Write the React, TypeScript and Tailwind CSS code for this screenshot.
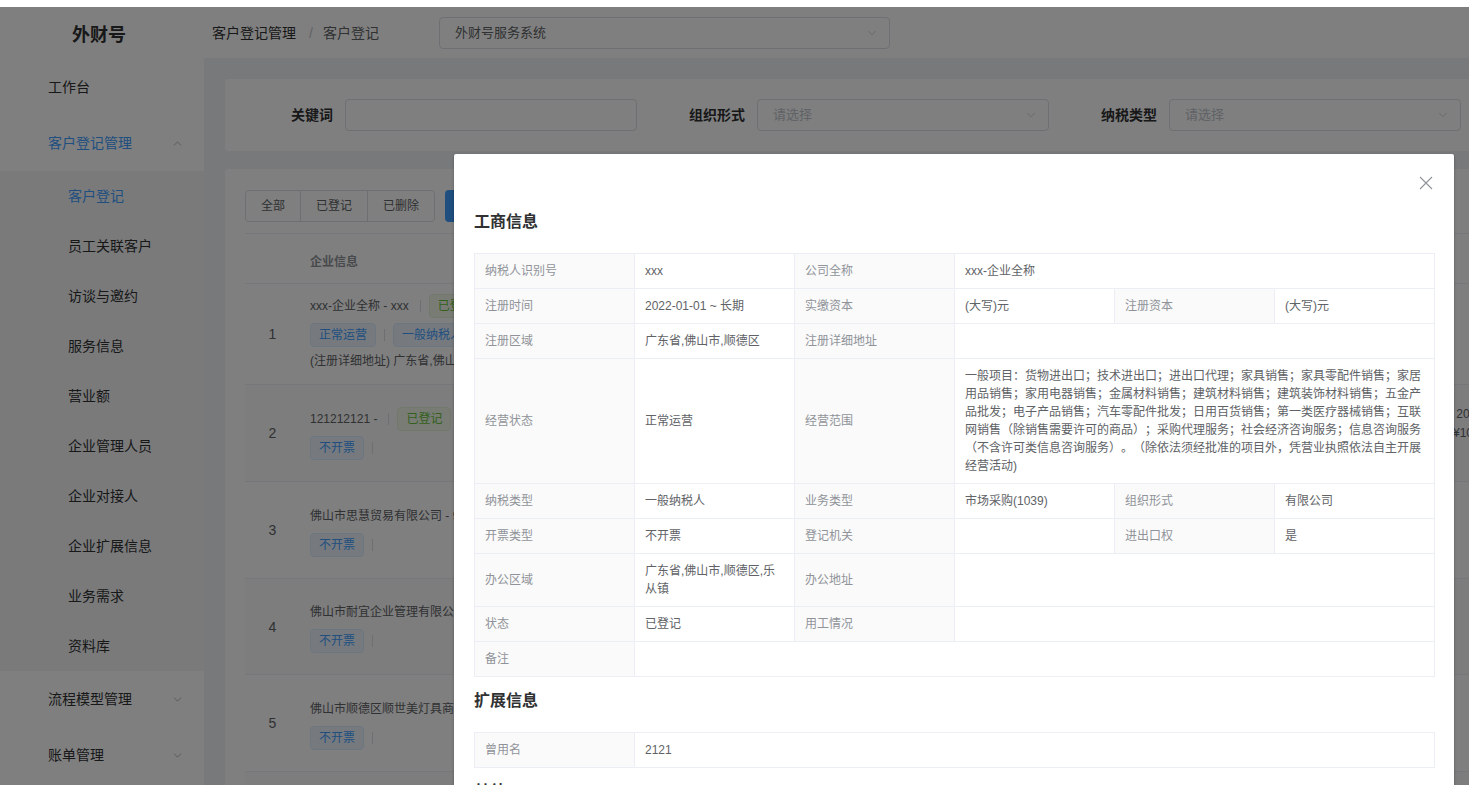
import { ChevronDown, ChevronUp } from "lucide-react";

/* ----------------------------------------------------------------
   小组件
---------------------------------------------------------------- */
function Tag({ color, children }: { color: "blue" | "green"; children: React.ReactNode }) {
  const cls =
    color === "green"
      ? "bg-[#f0f9eb] border-[#e1f3d8] text-[#67c23a]"
      : "bg-[#ecf5ff] border-[#d9ecff] text-[#409eff]";
  return (
    <span className={`inline-flex items-center h-6 px-2 text-xs border rounded-[4px] whitespace-nowrap ${cls}`}>
      {children}
    </span>
  );
}

function Sep({ first }: { first?: boolean }) {
  return <span className={`inline-block w-px h-3 bg-[#dcdfe6] ${first ? "ml-[11px] mr-2" : "mx-2"}`} />;
}

function Select({ placeholder, value, width }: { placeholder?: string; value?: string; width: string }) {
  return (
    <div className={`${width} h-8 flex items-center justify-between border border-[#dcdfe6] rounded-[4px] bg-white pl-[15px] pr-[10px]`}>
      <span className={`text-[13px] ${value ? "text-[#606266]" : "text-[#c0c4cc]"}`}>{value ?? placeholder}</span>
      <ChevronDown className="w-[14px] h-[14px] text-[#c0c4cc]" strokeWidth={1.25} />
    </div>
  );
}

/* ----------------------------------------------------------------
   数据
---------------------------------------------------------------- */
const subMenu = [
  "客户登记",
  "员工关联客户",
  "访谈与邀约",
  "服务信息",
  "营业额",
  "企业管理人员",
  "企业对接人",
  "企业扩展信息",
  "业务需求",
  "资料库",
];

type Row = {
  name: string;
  registered?: boolean;
  tags: string[];
  address?: string;
  extra?: [string, string];
  height: string;
};

const rows: Row[] = [
  {
    name: "xxx-企业全称 - xxx",
    registered: true,
    tags: ["正常运营", "一般纳税人"],
    address: "(注册详细地址) 广东省,佛山市,顺德区",
    height: "h-[101px]",
  },
  { name: "121212121 -", registered: true, tags: ["不开票"], extra: ["- 2022-01-01", "(¥100.00)"], height: "h-[97px]" },
  { name: "佛山市思慧贸易有限公司 - 9144", tags: ["不开票"], height: "h-[97px]" },
  { name: "佛山市耐宜企业管理有限公司 - 9144", tags: ["不开票"], height: "h-[96px]" },
  { name: "佛山市顺德区顺世美灯具商行 - 9244", tags: ["不开票"], height: "h-[97px]" },
  { name: "佛山市顺德区乐从镇家具有限公司 - 9144", tags: ["不开票"], height: "h-[97px]" },
];

const scope =
  "一般项目：货物进出口；技术进出口；进出口代理；家具销售；家具零配件销售；家居用品销售；家用电器销售；金属材料销售；建筑材料销售；建筑装饰材料销售；五金产品批发；电子产品销售；汽车零配件批发；日用百货销售；第一类医疗器械销售；互联网销售（除销售需要许可的商品）；采购代理服务；社会经济咨询服务；信息咨询服务（不含许可类信息咨询服务）。（除依法须经批准的项目外，凭营业执照依法自主开展经营活动)";

const L = "border border-[#ebeef5] bg-[#fafafa] text-[#909399] px-[10px] py-2 align-middle";
const V = "border border-[#ebeef5] bg-white text-[#606266] px-[10px] py-2 align-middle";

/* ----------------------------------------------------------------
   页面
---------------------------------------------------------------- */
export default function App() {
  return (
    <div className="relative w-[1469px] h-[785px] overflow-hidden bg-white font-['Liberation_Sans','Noto_Sans_CJK_SC',sans-serif]">
      <div className="h-[7px] bg-white" />
      <div className="relative h-[778px] overflow-hidden">
        {/* Header */}
        <div className="h-[51px] flex items-center bg-white">
          <div className="w-[204px] pr-[6px] pt-[5px] text-center text-[18px] font-bold text-[#303133]">外财号</div>
          <div className="flex items-center pl-2 text-sm">
            <span className="text-[#303133]">客户登记管理</span>
            <span className="ml-[13px] mr-[10px] text-[#c0c4cc]">/</span>
            <span className="text-[#606266]">客户登记</span>
          </div>
          <div className="ml-[60px]">
            <Select value="外财号服务系统" width="w-[451px]" />
          </div>
        </div>

        <div className="flex">
          {/* Sidebar */}
          <div className="w-[204px] shrink-0 bg-white pt-px text-sm text-[#303133]">
            <div className="h-14 flex items-center pl-12">工作台</div>
            <div className="h-14 flex items-center justify-between pl-12 pr-[20px] text-[#409eff]">
              客户登记管理
              <ChevronUp className="w-[13px] h-[13px] text-[#909399]" strokeWidth={1.25} />
            </div>
            <div className="bg-[#f4f5f7]">
              {subMenu.map((m, i) => (
                <div key={m} className={`h-[50px] flex items-center pl-[68px] ${i === 0 ? "text-[#409eff]" : ""}`}>
                  {m}
                </div>
              ))}
            </div>
            <div className="h-14 flex items-center justify-between pl-12 pr-[20px]">
              流程模型管理
              <ChevronDown className="w-[13px] h-[13px] text-[#909399]" strokeWidth={1.25} />
            </div>
            <div className="h-14 flex items-center justify-between pl-12 pr-[20px]">
              账单管理
              <ChevronDown className="w-[13px] h-[13px] text-[#909399]" strokeWidth={1.25} />
            </div>
          </div>

          {/* Main */}
          <div className="w-[1320px] shrink-0 bg-[#f0f2f5] pl-[21px] pt-[21px] h-[727px]">
            {/* 筛选 */}
            <div className="w-[1290px] h-[72px] bg-white rounded-[4px] p-5 flex gap-5">
              {[
                { label: "关键词", input: true },
                { label: "组织形式" },
                { label: "纳税类型" },
              ].map((f) => (
                <div key={f.label} className="w-[392px] shrink-0 flex items-center">
                  <div className="w-[100px] pr-3 text-right text-sm font-bold text-[#303133]">{f.label}</div>
                  {f.input ? (
                    <div className="w-[292px] h-8 border border-[#dcdfe6] rounded-[4px] bg-white" />
                  ) : (
                    <Select placeholder="请选择" width="w-[292px]" />
                  )}
                </div>
              ))}
            </div>

            {/* 列表 */}
            <div className="w-[1290px] h-[700px] mt-[18px] bg-white rounded-[4px] pt-[21px] px-5">
              <div className="flex items-center gap-[10px]">
                <div className="flex h-8 border border-[#dcdfe6] rounded-[4px] text-xs text-[#606266]">
                  <span className="px-[15px] flex items-center">全部</span>
                  <span className="px-[15px] flex items-center border-l border-[#dcdfe6]">已登记</span>
                  <span className="px-[15px] flex items-center border-l border-[#dcdfe6]">已删除</span>
                </div>
                <div className="h-8 px-[15px] flex items-center rounded-[4px] bg-[#409eff] text-xs text-white">新增客户</div>
              </div>

              <div className="mt-[11px] border-t border-[#ebeef5]">
                <div className="h-[50px] flex items-center pt-[6px] border-b border-[#ebeef5] text-xs font-bold text-[#909399]">
                  <div className="w-[55px] shrink-0" />
                  <div className="pl-[10px]">企业信息</div>
                </div>
                {rows.map((r, i) => (
                  <div
                    key={i}
                    className={`${r.height} flex items-center border-b border-[#ebeef5] ${i % 2 === 1 ? "bg-[#fafafa]" : ""}`}
                  >
                    <div className="w-[55px] shrink-0 text-center text-sm text-[#606266]">{i + 1}</div>
                    <div className={`w-[1147px] shrink-0 pl-[10px] flex flex-col gap-[5px] text-xs text-[#606266] ${i === 0 ? "pb-[5px]" : ""}`}>
                      <div className="flex items-center h-6">
                        <span>{r.name}</span>
                        {r.registered && (
                          <>
                            <Sep first />
                            <Tag color="green">已登记</Tag>
                          </>
                        )}
                      </div>
                      <div className="flex items-center h-6">
                        {r.tags.map((t, j) => (
                          <span key={t} className="flex items-center">
                            {j > 0 && <Sep />}
                            <Tag color="blue">{t}</Tag>
                          </span>
                        ))}
                        <Sep />
                      </div>
                      {r.address && <div className="leading-[18px]">{r.address}</div>}
                    </div>
                    {r.extra && (
                      <div className="shrink-0 pl-[2px] text-xs text-[#606266] leading-[19px] whitespace-nowrap -mt-[18px]">
                        <div>{r.extra[0]}</div>
                        <div>{r.extra[1]}</div>
                      </div>
                    )}
                  </div>
                ))}
              </div>
            </div>
          </div>
        </div>

        {/* 遮罩 */}
        <div className="absolute inset-0 bg-black/50" />

        {/* 弹窗 */}
        <div className="absolute left-[454px] top-[147px] w-[1000px] h-[900px] bg-white rounded-[2px] shadow-[0_1px_3px_rgba(0,0,0,0.3)] px-5 pt-[54px] [text-spacing-trim:space-all]">
          <svg className="absolute top-[22px] right-[21px] w-[14px] h-[14px]" viewBox="0 0 14 14" fill="none">
            <path d="M1 1 L13 13 M13 1 L1 13" stroke="#909399" strokeWidth="1.1" />
          </svg>

          <h3 className="text-base font-bold leading-7 text-[#303133] mb-[17px]">工商信息</h3>
          <table className="w-[960px] table-fixed border-collapse text-xs leading-[18px]">
            <colgroup>
              {[0, 1, 2, 3, 4, 5].map((c) => (
                <col key={c} className="w-[160px]" />
              ))}
            </colgroup>
            <tbody>
              <tr>
                <td className={L}>纳税人识别号</td>
                <td className={V}>xxx</td>
                <td className={L}>公司全称</td>
                <td className={V} colSpan={3}>xxx-企业全称</td>
              </tr>
              <tr>
                <td className={L}>注册时间</td>
                <td className={V}>2022-01-01 ~ 长期</td>
                <td className={L}>实缴资本</td>
                <td className={V}>(大写)元</td>
                <td className={L}>注册资本</td>
                <td className={V}>(大写)元</td>
              </tr>
              <tr>
                <td className={L}>注册区域</td>
                <td className={V}>广东省,佛山市,顺德区</td>
                <td className={L}>注册详细地址</td>
                <td className={V} colSpan={3}></td>
              </tr>
              <tr>
                <td className={L}>经营状态</td>
                <td className={V}>正常运营</td>
                <td className={L}>经营范围</td>
                <td className={V} colSpan={3}>{scope}</td>
              </tr>
              <tr>
                <td className={L}>纳税类型</td>
                <td className={V}>一般纳税人</td>
                <td className={L}>业务类型</td>
                <td className={V}>市场采购(1039)</td>
                <td className={L}>组织形式</td>
                <td className={V}>有限公司</td>
              </tr>
              <tr>
                <td className={L}>开票类型</td>
                <td className={V}>不开票</td>
                <td className={L}>登记机关</td>
                <td className={V}></td>
                <td className={L}>进出口权</td>
                <td className={V}>是</td>
              </tr>
              <tr>
                <td className={L}>办公区域</td>
                <td className={V}>广东省,佛山市,顺德区,乐从镇</td>
                <td className={L}>办公地址</td>
                <td className={V} colSpan={3}></td>
              </tr>
              <tr>
                <td className={L}>状态</td>
                <td className={V}>已登记</td>
                <td className={L}>用工情况</td>
                <td className={V} colSpan={3}></td>
              </tr>
              <tr>
                <td className={L}>备注</td>
                <td className={V} colSpan={5}>
                  &nbsp;
                </td>
              </tr>
            </tbody>
          </table>

          <h3 className="mt-[10px] text-base font-bold leading-7 text-[#303133] mb-[17px]">扩展信息</h3>
          <table className="w-[960px] table-fixed border-collapse text-xs leading-[18px]">
            <colgroup>
              {[0, 1, 2, 3, 4, 5].map((c) => (
                <col key={c} className="w-[160px]" />
              ))}
            </colgroup>
            <tbody>
              <tr>
                <td className={L}>曾用名</td>
                <td className={V} colSpan={5}>2121</td>
              </tr>
            </tbody>
          </table>

          <h3 className="mt-[10px] text-base font-bold leading-7 text-[#303133] mb-[17px]">其他</h3>
        </div>
      </div>
    </div>
  );
}
